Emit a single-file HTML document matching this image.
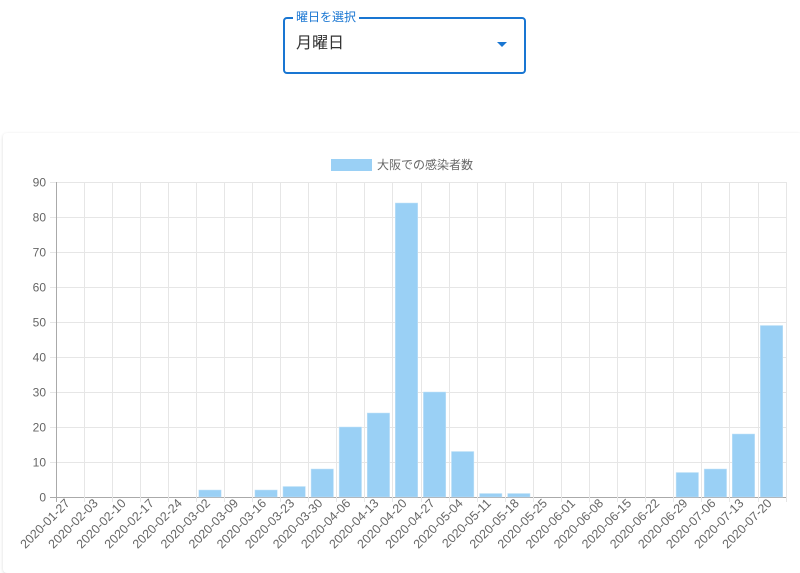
<!DOCTYPE html>
<html><head><meta charset="utf-8"><style>
body{margin:0;width:800px;height:568px;overflow:hidden;background:#fff;font-family:"Liberation Sans","Noto Sans CJK JP",sans-serif;position:relative}
.sel{position:absolute;left:283px;top:17px;width:239px;height:53px;border:2px solid #1976d2;border-radius:4px;box-sizing:content-box}
.lab{position:absolute;left:293px;top:9px;background:#fff;padding:0 3px;font-size:12px;color:#1976d2;line-height:16px}
.val{position:absolute;left:296px;top:33px;font-size:16px;color:#333;line-height:22px}
.arr{position:absolute;left:497px;top:42px;width:0;height:0;border-left:5px solid transparent;border-right:5px solid transparent;border-top:5px solid #1976d2}
.card{position:absolute;left:3px;top:133px;width:800px;height:440px;background:#fff;box-shadow:0 1px 3px rgba(0,0,0,.15);border-radius:4px}
svg{position:absolute;left:0;top:0}
</style></head><body>
<div class="sel"></div><div class="lab">曜日を選択</div><div class="val">月曜日</div><div class="arr"></div>
<div class="card"></div>
<svg width="800" height="568" id="s" font-family="Liberation Sans, Noto Sans CJK JP, sans-serif">
<rect x="331" y="159" width="41" height="12" fill="#9ad0f5"/>
<text x="377" y="169" font-size="12" fill="#666">大阪での感染者数</text>
<g id="g"></g>
</svg>
<script>
var g=document.getElementById('g'),h='';
var d=[0,0,0,0,0,2,0,2,3,8,20,24,84,30,13,1,1,0,0,0,0,0,7,8,18,49];
var L=['01-27','02-03','02-10','02-17','02-24','03-02','03-09','03-16','03-23','03-30','04-06','04-13','04-20','04-27','05-04','05-11','05-18','05-25','06-01','06-08','06-15','06-22','06-29','07-06','07-13','07-20'];
var x0=55.5,w=28.08,y0=497,k=3.5;
for(var i=0;i<=9;i++){var y=y0-i*10*k+0.5;h+='<line x1="50" x2="786" y1="'+y+'" y2="'+y+'" stroke="'+(i?'#e6e6e6':'#aaa')+'"/>';h+='<text x="46" y="'+(y+4)+'" font-size="12" fill="#666" text-anchor="end">'+i*10+'</text>';}
for(var i=0;i<=26;i++){var x=Math.round(x0+i*w)+0.5;h+='<line x1="'+x+'" x2="'+x+'" y1="182" y2="502" stroke="'+(i?'#e6e6e6':'#aaa')+'"/>';}
for(var i=0;i<26;i++){var cx=x0+i*w+w/2;var bh=d[i]*k;if(bh)h+='<rect x="'+(cx-11.2)+'" y="'+(y0-bh)+'" width="22.4" height="'+bh+'" fill="#9ad0f5" stroke="#c5e3f8" stroke-width="0.5"/>';
h+='<text transform="translate('+(cx+1)+',504) rotate(-45)" font-size="12.5" fill="#666" text-anchor="end">2020-'+L[i]+'</text>';}
g.innerHTML=h;
</script>
</body></html>
